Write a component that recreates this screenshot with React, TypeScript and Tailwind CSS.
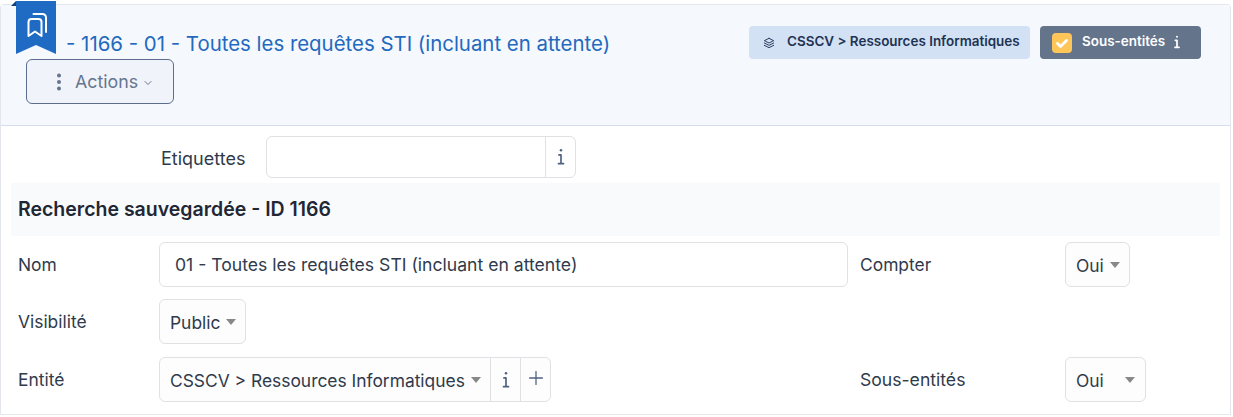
import { TbChevronDown, TbDotsVertical, TbPlus, TbStack2 } from 'react-icons/tb';

function InfoI({ className, strokeWidth = 2 }: { className?: string; strokeWidth?: number }) {
  return (
    <svg viewBox="0 0 24 24" fill="none" stroke="currentColor" strokeWidth={strokeWidth} strokeLinecap="round" strokeLinejoin="round" className={className}>
      <path d="M12 4h.01" strokeWidth={3} />
      <path d="M9.5 9.5H12V20M9 20h6" />
    </svg>
  );
}

function Caret() {
  return <span className="inline-block h-0 w-0 border-x-[5px] border-t-[6px] border-x-transparent border-t-[#888888]" />;
}

function Select({ label, className }: { label: string; className: string }) {
  return (
    <div className={`flex h-[45px] items-center justify-between rounded-md border border-[#dfe1e5] bg-[#fdfdfd] pl-[10px] text-[17.4px] text-[#2f3a4c] ${className}`}>
      <span className="translate-y-[2px]">{label}</span>
      <Caret />
    </div>
  );
}

function AddonBox({ children, last }: { children: React.ReactNode; last?: boolean }) {
  return (
    <div className={`flex w-[30px] items-center justify-center border-l border-[#dfe1e5] text-[#4f6180] ${last ? 'rounded-r-md' : ''}`}>
      {children}
    </div>
  );
}

export default function App() {
  return (
    <div className="h-[417px] w-[1233px] overflow-hidden bg-white pt-[4px] font-['Inter',sans-serif]">
      <div className="relative h-[411px] w-[1231px] rounded-t border border-[#e3e6ea] border-b-[#e6e8ec] bg-white">
        {/* Ribbon */}
        <div className="absolute -top-[4px] left-[15px] h-[54px] w-[40px]">
          <svg viewBox="0 0 40 54" className="absolute inset-0 h-full w-full">
            <polygon points="0,0 40,0 40,53 20,44 0,53" fill="#1f6bc4" />
          </svg>
          <span className="absolute -left-[5px] top-[0px] h-0 w-0 border-b-[5px] border-l-[5px] border-b-[#123f7a] border-l-transparent" />
          <svg viewBox="0 0 20 24" className="absolute left-[11px] top-[12px] h-[24px] w-[21px]" fill="none" stroke="white" strokeWidth={2} strokeLinejoin="round" strokeLinecap="round">
            <path d="M1 9a3 3 0 0 1 3-3h7a3 3 0 0 1 3 3v14l-6.5-4.5L1 23z" />
            <path d="M6 1h9a3.5 3.5 0 0 1 3.5 3.5V19" />
          </svg>
        </div>

        {/* Header */}
        <div className="flex h-[121px] items-start justify-between border-b border-[#d5dfec] bg-[#f5f8fd] pl-[25px] pr-[29px] pt-[21px]">
          <div>
            <h1 className="h-[33px] translate-y-px pl-[40px] text-[20.4px] font-normal leading-[34px] whitespace-nowrap text-[#2369bd]">
              - 1166 - 01 - Toutes les requêtes STI (incluant en attente)
            </h1>
            <button className="flex h-[45px] w-[148px] items-center rounded-md border border-[#5c6d8e] bg-[#f0f3f9] pl-[21px] text-[17.8px] text-[#66758f]">
              <TbDotsVertical className="size-[22px]" strokeWidth={2.4} />
              <span className="ml-[5px] translate-y-px">Actions</span>
              <TbChevronDown className="ml-[4px] mt-[3px] size-[12px]" />
            </button>
          </div>
          <div className="flex gap-[10px]">
            <div className="flex h-[33px] w-[281px] items-center rounded bg-[#d2e1f3] pl-[13px] text-[13.45px] font-semibold text-[#1f3354]">
              <TbStack2 className="size-[14px]" strokeWidth={1.6} />
              <span className="ml-[11px] -translate-y-px whitespace-nowrap">CSSCV &gt; Ressources Informatiques</span>
            </div>
            <div className="flex h-[33px] w-[161px] items-center rounded bg-[#64748b] pl-[12px] text-[13.45px] font-semibold text-white">
              <span className="flex size-[20px] items-center justify-center rounded bg-[#fec659]">
                <svg viewBox="0 0 20 20" className="size-[20px]" fill="none" stroke="white" strokeWidth={2.8} strokeLinecap="round" strokeLinejoin="round">
                  <path d="M5.5 10.5l3 3 6-6" />
                </svg>
              </span>
              <span className="ml-[10px] -translate-y-px">Sous-entités</span>
              <InfoI className="ml-[4px] size-[16px] -translate-y-px" strokeWidth={2.6} />
            </div>
          </div>
        </div>

        {/* Form */}
        <div className="flex h-[57px] items-start pl-[160px] pt-[10px] text-[18px] text-[#2f3a4c]">
          <div className="flex h-[44px] w-[86px] items-center">Etiquettes</div>
          <div className="ml-[19px] flex h-[42px] w-[310px] rounded-md border border-[#dfe1e5] bg-white">
            <div className="flex-1" />
            <AddonBox last>
              <InfoI className="size-[20px]" />
            </AddonBox>
          </div>
        </div>

        <div className="mx-[10px] flex h-[53px] items-center bg-[#f9fafc] px-[7px] text-[19.5px] font-semibold whitespace-nowrap text-[#1f2735]">
          Recherche sauvegardée - ID 1166
        </div>

        <div className="flex flex-col px-[17px] pt-[6px] text-[17.4px] text-[#2f3a4c]">
          <div className="flex items-start">
            <div className="w-[141px] pt-[10px]">Nom</div>
            <div className="flex h-[45px] w-[689px] items-center rounded-md border border-[#dfe1e5] bg-white pl-[15px] text-[17.6px]">
              <span className="translate-y-px">01 - Toutes les requêtes STI (incluant en attente)</span>
            </div>
            <div className="ml-[12px] w-[205px] pt-[10px]">Compter</div>
            <Select label="Oui" className="w-[65px] pr-[9px]" />
          </div>
          <div className="mt-[12px] flex items-start">
            <div className="w-[141px] pt-[10px]">Visibilité</div>
            <Select label="Public" className="w-[87px] pr-[9px]" />
          </div>
          <div className="mt-[13px] flex items-start">
            <div className="w-[141px] pt-[10px]">Entité</div>
            <div className="flex h-[45px] w-[392px] rounded-md border border-[#dfe1e5] bg-[#fdfdfd]">
              <div className="flex flex-1 items-center justify-between pl-[10px] pr-[9px]">
                <span className="translate-y-[2px] whitespace-nowrap">CSSCV &gt; Ressources Informatiques</span>
                <Caret />
              </div>
              <AddonBox>
                <InfoI className="size-[20px]" />
              </AddonBox>
              <AddonBox last>
                <TbPlus className="mb-[3px] size-[22px]" strokeWidth={1.4} />
              </AddonBox>
            </div>
            <div className="ml-[309px] w-[205px] pt-[10px] text-[17.6px]">Sous-entités</div>
            <Select label="Oui" className="w-[81px] pr-[10px]" />
          </div>
        </div>
      </div>
    </div>
  );
}
